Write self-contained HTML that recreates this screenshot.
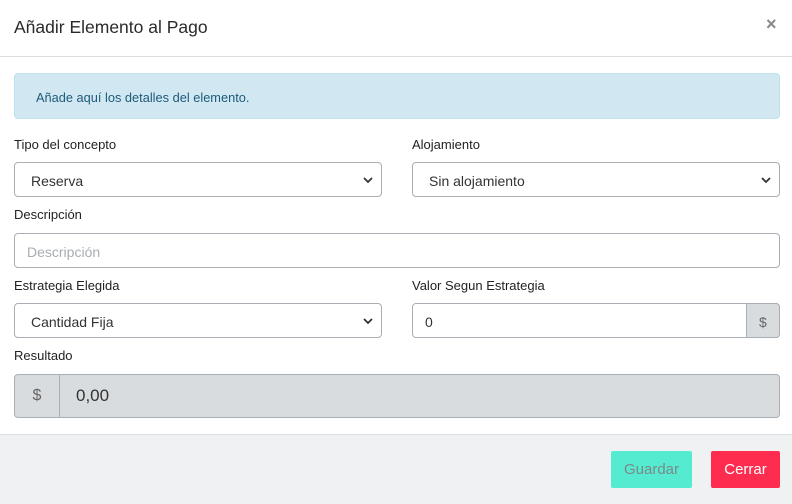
<!DOCTYPE html><html><head><style>
body{margin:0;width:792px;height:503px;background:#fff;font-family:"Liberation Sans",sans-serif;position:relative;overflow:hidden;color:#212529}
.a{position:absolute}
.lbl{font-size:13px;color:#222}
.box{position:absolute;border:1px solid #a9afb5;border-radius:4px;background:#fff;box-sizing:border-box;font-size:14px;color:#333;padding-left:16px;display:flex;align-items:center;padding-top:2px}
.chev{position:absolute;right:8px;top:11px}
</style></head><body>
<div class="a" style="left:14px;top:17px;font-size:17.5px;color:#2a2a2a">Añadir Elemento al Pago</div>
<div class="a" style="left:766px;top:14px;font-size:18px;color:#888;font-weight:bold">×</div>
<div class="a" style="left:0;top:56px;width:792px;height:1px;background:#dcdee0"></div>
<div class="a" style="left:14px;top:73px;width:766px;height:46px;box-sizing:border-box;background:#d1e8f3;border:1px solid #bfe3ee;border-radius:4px;font-size:12.8px;color:#1e5a7a;padding:16px 0 0 21px">Añade aquí los detalles del elemento.</div>
<div class="a lbl" style="left:14px;top:137px">Tipo del concepto</div>
<div class="a lbl" style="left:412px;top:137px">Alojamiento</div>
<div class="box" style="left:14px;top:162px;width:368px;height:35px">Reserva<svg class="chev" width="10" height="12" viewBox="0 0 10 12"><path d="M1 4l4 4 4-4" fill="none" stroke="#333" stroke-width="1.8"/></svg></div>
<div class="box" style="left:412px;top:162px;width:368px;height:35px">Sin alojamiento<svg class="chev" width="10" height="12" viewBox="0 0 10 12"><path d="M1 4l4 4 4-4" fill="none" stroke="#333" stroke-width="1.8"/></svg></div>
<div class="a lbl" style="left:14px;top:207px">Descripción</div>
<div class="box" style="left:14px;top:233px;width:766px;height:35px;color:#a8adb2;padding-left:12px;font-size:14px">Descripción</div>
<div class="a lbl" style="left:14px;top:278px">Estrategia Elegida</div>
<div class="a lbl" style="left:412px;top:278px">Valor Segun Estrategia</div>
<div class="box" style="left:14px;top:303px;width:368px;height:35px">Cantidad Fija<svg class="chev" width="10" height="12" viewBox="0 0 10 12"><path d="M1 4l4 4 4-4" fill="none" stroke="#333" stroke-width="1.8"/></svg></div>
<div class="box" style="left:412px;top:303px;width:368px;height:35px;padding-left:12px">0</div>
<div class="box" style="left:746px;top:303px;width:34px;height:35px;background:#d8dcdf;border-radius:0 4px 4px 0;color:#666;padding-left:12px;font-size:14px">$</div>
<div class="a lbl" style="left:14px;top:348px">Resultado</div>
<div class="box" style="left:14px;top:374px;width:766px;height:44px;background:#d8dcdf;padding-left:0;padding-top:0;font-size:17px;color:#333">
<div style="width:44px;height:42px;border-right:1px solid #a9afb5;display:flex;align-items:center;justify-content:center;color:#666;font-size:16px">$</div>
<div style="padding-left:16px">0,00</div></div>
<div class="a" style="left:0;top:434px;width:792px;height:69px;background:#f0f1f3;border-top:1px solid #dcdee0"></div>
<div class="a" style="left:611px;top:451px;width:81px;height:37px;background:#55ebd0;border-radius:2px;color:#7b8a88;font-size:15px;text-align:center;line-height:38px">Guardar</div>
<div class="a" style="left:711px;top:451px;width:69px;height:37px;background:#fe2d50;border-radius:2px;color:#fff;font-size:15px;text-align:center;line-height:38px">Cerrar</div>
</body></html>
